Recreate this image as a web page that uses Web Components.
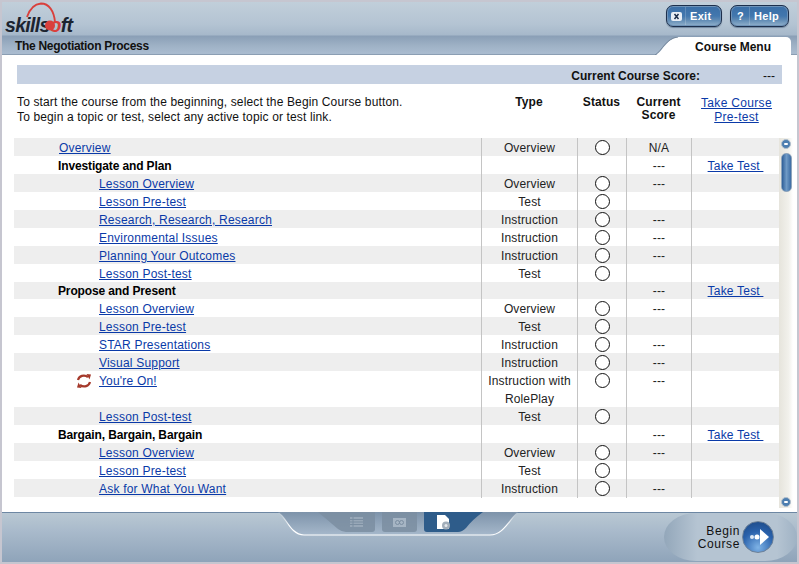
<!DOCTYPE html>
<html><head><meta charset="utf-8"><style>
html,body{margin:0;padding:0;width:799px;height:564px;overflow:hidden;background:#c6c6d0;font-family:"Liberation Sans",Arial,sans-serif}
</style></head><body>
<course-app></course-app>
<script>
const LINK='#0a3aa8';
function def(name,css,html,init){
  customElements.define(name,class extends HTMLElement{
    connectedCallback(){
      if(this.shadowRoot)return;
      const r=this.attachShadow({mode:'open'});
      r.innerHTML='<style>'+css+'</style>'+(typeof html==='function'?html(this):html);
      if(init)init(this,r);
    }
  });
}
def('sk-logo',`:host{display:block;position:relative;width:78px;height:34px}
.t{position:absolute;left:1px;top:12px;font:italic bold 19.500px "Liberation Sans",sans-serif;letter-spacing:-.7px;color:#1c2430;white-space:nowrap}
.t i{color:#d9403c;font-style:inherit}
svg{position:absolute;left:0;top:0}`,
`<span class="t">skills<i>o</i>ft</span><svg width="78" height="34" viewBox="0 0 78 34"><path d="M23 15 C26 6 31 2 37 1.500 C45 1.500 50 9 51 20" fill="none" stroke="#d9403c" stroke-width="1.800"/><circle cx="46" cy="23.500" r="5" fill="#d9403c"/></svg>`);
def('sk-btn',`:host{display:flex;align-items:center;box-sizing:border-box;height:22px;border:1px solid #1d2f4c;border-radius:7px;background:linear-gradient(#3a6ea6 0,#4277ae 50%,#5f8ab4 70%,#93b1cb 100%);box-shadow:inset 0 0 0 1px #6f93b8,0 1px 1px #7288a0;color:#fff;font:bold 11px "Liberation Sans",sans-serif;letter-spacing:.3px}
.i{width:17px;margin-left:1px;text-align:center;font-size:11px;display:flex;justify-content:center}
.i svg{display:block}
.l{flex:1;padding-left:4px;border-left:1px solid rgba(255,255,255,.18);line-height:18px}`,
h=>`<span class="i">${h.getAttribute('icon')==='x'?'<svg width="11" height="9" viewBox="0 0 11 9"><rect width="11" height="9" rx="2" fill="#e8eef5"/><path d="M3.500 2 L7.500 7 M7.500 2 L3.500 7" stroke="#1d2f4c" stroke-width="1.500"/></svg>':'?'}</span><span class="l">${h.getAttribute('label')}</span>`);
def('sk-header',`:host{display:block;position:relative;height:53px;background:linear-gradient(#c1cfda 0,#b4c4d3 22px,#a6b8ca 33px,#8a9fb6 34px,#9fb2c6 44px,#a9bbcf 51px,#a9bbcf 52px,#6d8197 53px)}
.top{display:flex;justify-content:space-between;padding:0 8px 0 2px;height:35px;box-sizing:border-box}
.btns{display:flex;gap:8px;padding-top:3px}
.title{font:bold 12px/16px "Liberation Sans",sans-serif;letter-spacing:-.3px;color:#111;padding:1px 0 0 13px}
.tab{position:absolute;right:6px;top:35px;width:112px;height:18px;background:#fff;border-radius:0 5px 0 0;text-align:center;font:bold 12px/20px "Liberation Sans",sans-serif;color:#111;padding-right:4px;box-sizing:border-box;white-space:nowrap}
svg{position:absolute;right:118px;top:35px}`,
`<div class="top"><sk-logo></sk-logo><div class="btns"><sk-btn icon="x" label="Exit" style="width:56px"></sk-btn><sk-btn icon="?" label="Help" style="width:59px"></sk-btn></div></div>
<div class="title">The Negotiation Process</div>
<svg width="24" height="18" viewBox="0 0 24 18"><path d="M1 18 C8 14 12 1 24 0 L24 18Z" fill="#fff"/><path d="M0 18 C7 14 11 1 23 0" fill="none" stroke="#76889c" stroke-width="1"/></svg>
<div class="tab">Course Menu</div>`);
def('score-bar',`:host{display:flex;justify-content:flex-end;height:19px;margin:10px 15px 0;background:#c6d1e2;font:bold 12px/22px "Liberation Sans",sans-serif;color:#111}
.a{margin-right:63px}.b{margin-right:7px;font-weight:normal}`,`<span class="a">Current Course Score:</span><span class="b">---</span>`);
def('intro-head',`:host{display:grid;grid-template-columns:464px 96px 49px 65px 91px;height:43px;margin:0 0 0 15px;padding-top:11px;font:12px/15px "Liberation Sans",sans-serif;letter-spacing:.14px;color:#111}
.c{text-align:center;font-weight:bold;letter-spacing:.1px;line-height:13px;margin-top:1px}
.l{text-align:center;color:${LINK};text-decoration:underline;letter-spacing:.32px;line-height:14px;margin-top:1px}
.p{white-space:nowrap}`,
`<div class="p">To start the course from the beginning, select the Begin Course button.<br>To begin a topic or test, select any active topic or test link.</div><div class="c">Type</div><div class="c">Status</div><div class="c">Current Score</div><div class="l">Take Course Pre-test</div>`);
def('course-row',`:host{display:grid;grid-template-columns:467px 96px 49px 65px 1fr;font:12px/18px "Liberation Sans",sans-serif;color:#222;letter-spacing:.15px}
:host(:nth-child(odd)){background:#eeeeee}
:host([short]){height:17px}
.c,.n{padding-top:1px;margin-bottom:-1px}
:host([short]) .c,:host([short]) .n{padding-top:0;margin-bottom:0}
.c{border-left:1px solid #c4c4c4;text-align:center;white-space:nowrap}
.n{position:relative;white-space:nowrap}
a{color:${LINK};text-decoration:underline;letter-spacing:.2px}
b{color:#000;letter-spacing:-.13px;margin-left:-1px}
.i1{padding-left:45px}.i2{padding-left:85px}
.o{display:inline-block;width:15px;height:15px;border:1px solid #111;border-radius:50%;box-sizing:border-box;vertical-align:top;margin-top:1px;background:#fff}
.spin{position:absolute;left:62px;top:2px}`,
h=>{const g=k=>h.getAttribute(k)||'';const lvl=g('lvl');
 const name=lvl==='h'?`<b>${g('name')}</b>`:`<a>${g('name')}</a>`;
 return `<div class="n ${lvl==='2'?'i2':'i1'}">${h.hasAttribute('spin')?`<svg class="spin" width="16" height="16" viewBox="0 0 16 16" fill="none" stroke="#a5392b" stroke-width="2.200"><path d="M2 7 C3 3 8 1 12 4"/><path d="M14 9 C13 13 8 15 4 12"/><path d="M10.500 1 L15 1.500 L13.500 6.500Z" fill="#a5392b" stroke="none"/><path d="M5.500 15 L1 14.500 L2.500 9.500Z" fill="#a5392b" stroke="none"/></svg>`:''}${name}</div><div class="c">${g('type').replace('|','<br>')}</div><div class="c">${g('st')?'<span class="o"></span>':''}</div><div class="c">${g('score')}</div><div class="c">${g('test')?`<a>${g('test')}&nbsp;</a>`:''}</div>`;});
def('course-table',`:host{display:block;flex:1;align-self:flex-start}`,`<slot></slot>`);
def('sk-scroll',`:host{display:block;position:relative;width:14px;background:linear-gradient(90deg,#e6e4dc,#f2f1ec 70%,#fff)}
.b{position:absolute;left:2px;width:10px;height:10px;border-radius:50%;background:#4d7eb0;border:1px solid #b3c0cc;box-sizing:border-box}
.b::after{content:"";position:absolute;left:2px;top:3px;width:4px;height:2px;background:#fff;border-radius:1px}
.th{position:absolute;left:2px;top:15px;width:11px;height:39px;border-radius:5px;background:linear-gradient(90deg,#2f5f98,#6f9ac6 50%,#3c6ca4);border:1px solid #8fa5bc;box-sizing:border-box}`,
`<div class="b" style="top:1px"></div><div class="th"></div><div class="b" style="bottom:1px"></div>`);
def('sk-footer',`:host{display:block;position:relative;height:50px;background:linear-gradient(#b9c8d3 0,#a9bacb 18px,#8ea3b9 50px);border-top:1px solid #6d87a3;box-sizing:border-box}
.dock{position:absolute;left:276px;top:-1px}
.begin{position:absolute;left:662px;top:0;width:133px;height:48px;border-radius:32px/24px;background:linear-gradient(90deg,#93a7ba,#b5c4d2 25%,#b5c4d2 85%,#9fb2c4);font:12px/13px "Liberation Sans",sans-serif;color:#111;letter-spacing:.6px}
.txt{position:absolute;right:57px;top:12px;text-align:right}
.ball{position:absolute;left:78px;top:8px;width:32px;height:32px;border-radius:50%;background:radial-gradient(circle at 50% 85%,#7fb3e6,#2a62ac 55%,#1c4680);border:1px solid #6d8198;box-sizing:border-box}`,
`<svg class="dock" width="240" height="26" viewBox="0 0 240 26"><defs><linearGradient id="f" x1="0" y1="0" x2="0" y2="1"><stop offset="0" stop-color="#7d93aa"/><stop offset="1" stop-color="#a6b8cb"/></linearGradient><linearGradient id="s" x1="0" y1="0" x2="0" y2="1"><stop offset="0" stop-color="#fff" stop-opacity="0"/><stop offset=".6" stop-color="#fff"/></linearGradient></defs>
<path d="M0 0 C8 4 12 23 26 23 L212 23 C226 23 232 6 240 0Z" fill="url(#f)"/><path d="M0 0 C8 4 12 23 26 23 L212 23 C226 23 232 6 240 0" fill="none" stroke="url(#s)" stroke-width="1.200"/>
<path d="M40 0 L97 0 L97 17 Q97 20 94 20 L68 20 Q64 20 60 17Z" fill="#7b8ea1" opacity=".85"/>
<path d="M104 0 L139 0 L139 17 Q139 20 136 20 L107 20 Q104 20 104 17Z" fill="#7b8ea1" opacity=".85"/>
<path d="M146 0 L205 0 Q194 8 188 16 Q184 20 180 20 L149 20 Q146 20 146 17Z" fill="#2e5c8a"/>
<g fill="#98a8b8"><rect x="72" y="5" width="13" height="10"/></g><g stroke="#7b8ea1" stroke-width="1"><path d="M72 7.500 H85 M72 10 H85 M72 12.500 H85 M75 5 V15"/></g>
<rect x="115" y="6" width="13" height="9" fill="#a6b5c4"/><g fill="none" stroke="#7b8ea1" stroke-width="1"><circle cx="119.500" cy="10.500" r="2"/><circle cx="123.500" cy="10.500" r="2"/></g>
<path d="M159 3 L167 3 L171 7 L171 17 L159 17Z" fill="#fff"/><circle cx="168" cy="13.500" r="4" fill="#a2aeba"/><circle cx="168" cy="13.500" r="1.500" fill="#e4e8ec"/></svg>
<div class="begin"><div class="txt">Begin<br>Course</div><div class="ball"><svg width="30" height="30" viewBox="0 0 30 30"><circle cx="9" cy="15" r="2" fill="#dfe9f5"/><circle cx="14" cy="15" r="2.500" fill="#fff"/><path d="M17 7 L26 15 L17 23Z" fill="#fff"/></svg></div></div>`);
def('course-app',`:host{display:flex;flex-direction:column;width:795px;height:560px;margin:2px 0 0 2px;background:#fff}
.main{flex:1;display:flex;flex-direction:column;min-height:0;background:#fff}
.body{flex:1;display:flex;min-height:0;padding:0 4px 4px 12px;overflow:hidden}`,
`<sk-header></sk-header><div class="main"><score-bar></score-bar><intro-head></intro-head><div class="body"><course-table id="t"></course-table><sk-scroll></sk-scroll></div></div><sk-footer></sk-footer>`,
(h,r)=>{const rows=[
['1','Overview','Overview',1,'N/A',''],['h','Investigate and Plan','',0,'---','Take Test'],
['2','Lesson Overview','Overview',1,'---',''],['2','Lesson Pre-test','Test',1,'',''],['2','Research, Research, Research','Instruction',1,'---',''],['2','Environmental Issues','Instruction',1,'---',''],['2','Planning Your Outcomes','Instruction',1,'---',''],['2','Lesson Post-test','Test',1,'',''],
['h','Propose and Present','',0,'---','Take Test','','short'],
['2','Lesson Overview','Overview',1,'---',''],['2','Lesson Pre-test','Test',1,'',''],['2','STAR Presentations','Instruction',1,'---',''],['2','Visual Support','Instruction',1,'---',''],['2',"You're On!",'Instruction with|RolePlay',1,'---','','s'],['2','Lesson Post-test','Test',1,'',''],
['h','Bargain, Bargain, Bargain','',0,'---','Take Test'],
['2','Lesson Overview','Overview',1,'---',''],['2','Lesson Pre-test','Test',1,'',''],['2','Ask for What You Want','Instruction',1,'---','']];
const t=r.getElementById('t');
rows.forEach(x=>{const e=document.createElement('course-row');e.setAttribute('lvl',x[0]);e.setAttribute('name',x[1]);e.setAttribute('type',x[2]);if(x[3])e.setAttribute('st','1');e.setAttribute('score',x[4]);e.setAttribute('test',x[5]);if(x[6])e.setAttribute('spin','');if(x[7])e.setAttribute('short','');t.appendChild(e);});});
</script></body></html>
